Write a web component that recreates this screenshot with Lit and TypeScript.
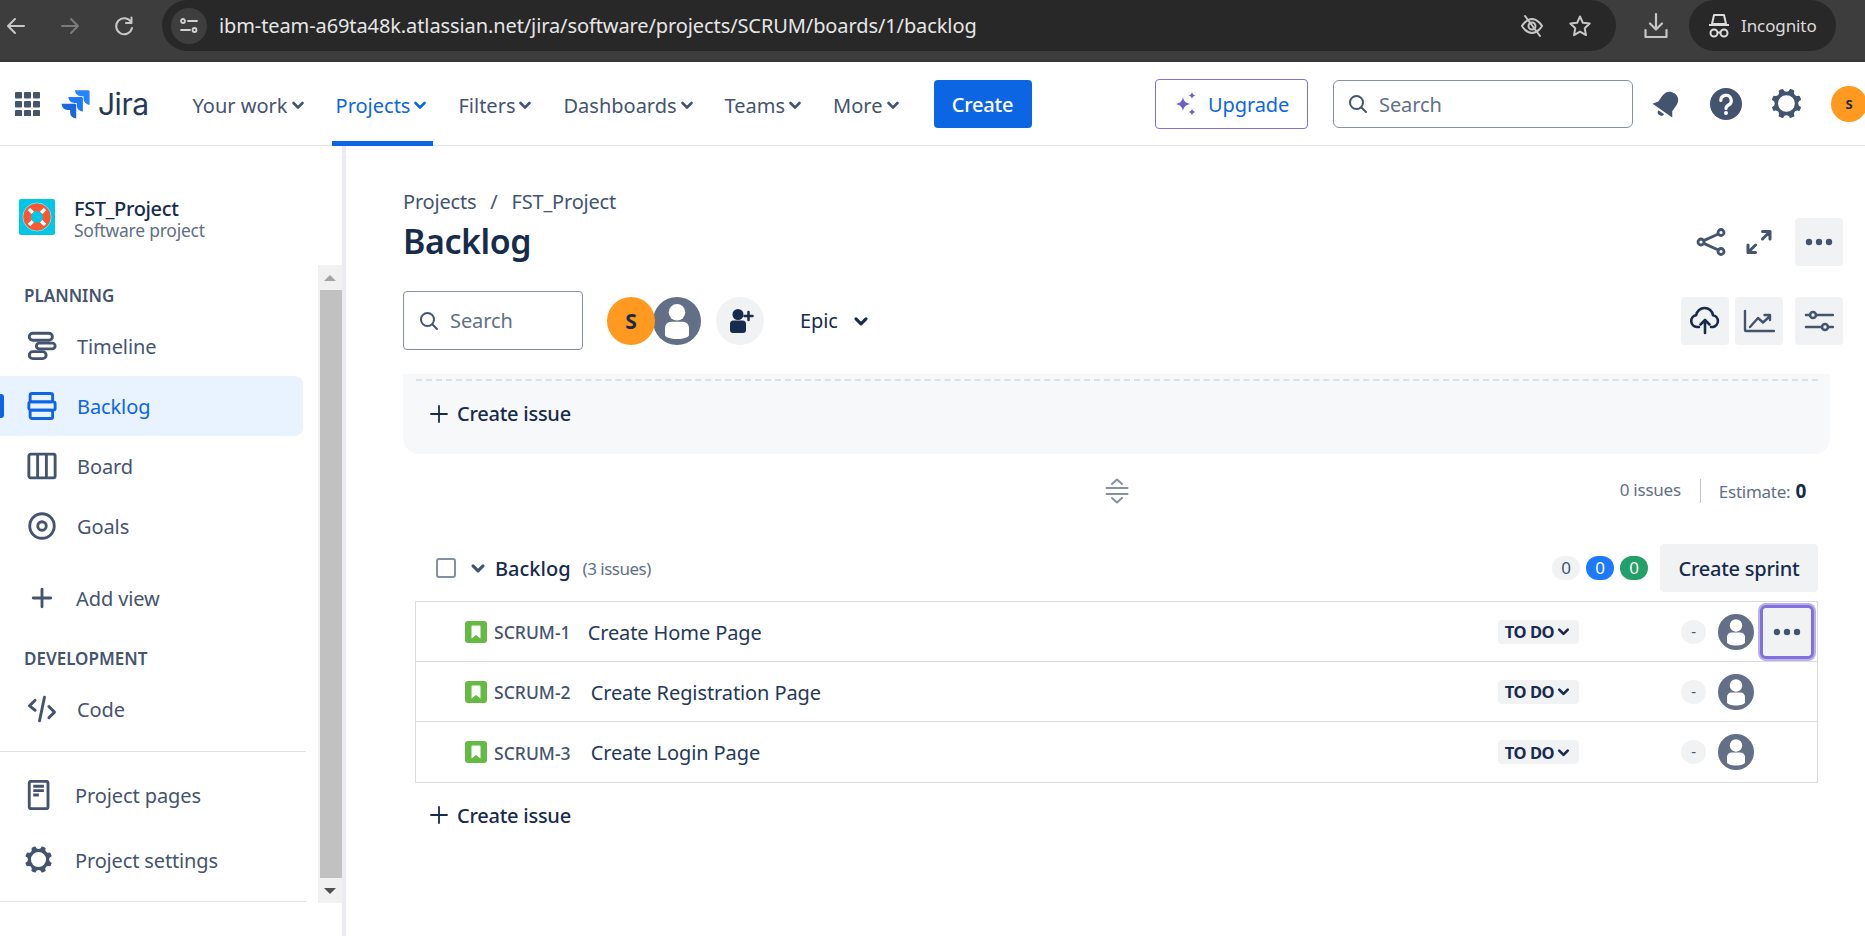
import { html, css, svg, LitElement } from 'lit';
import { customElement } from 'lit/decorators.js';

const chevron = (size = 18, w = 2.6) => html`<svg class="chev" width=${size} height=${size} viewBox="0 0 18 18" fill="none" stroke="currentColor" stroke-width=${w} stroke-linecap="round" stroke-linejoin="round"><path d="M4.5 7l4.5 4.5L13.500 7"/></svg>`;

const magnifier = html`<svg width="24" height="24" viewBox="0 0 24 24" fill="none" stroke="#44546f" stroke-width="2" stroke-linecap="round"><circle cx="10.500" cy="10.500" r="6.500"/><path d="M15.500 15.500L20 20"/></svg>`;

const avatar = (size: number) => html`<svg width=${size} height=${size} viewBox="0 0 36 36"><circle cx="18" cy="18" r="18" fill="#626f86"/><circle cx="18" cy="11.500" r="6.200" fill="#fff"/><path d="M9 23a4.500 4.500 0 0 1 4.500-4.500h9A4.500 4.500 0 0 1 27 23v5.500c0 1.500-4 3-9 3s-9-1.500-9-3z" fill="#fff"/></svg>`;

const dots = html`<svg width="30" height="10" viewBox="0 0 30 10" fill="#44546f"><circle cx="5" cy="5" r="3.200"/><circle cx="15" cy="5" r="3.200"/><circle cx="25" cy="5" r="3.200"/></svg>`;

const plus = html`<svg width="18" height="18" viewBox="0 0 18 18" stroke="#172b4d" stroke-width="1.800" stroke-linecap="round"><path d="M9 1v16M1 9h16"/></svg>`;

const gearPath = 'M11.701 16.7a5.002 5.002 0 110-10.003 5.002 5.002 0 010 10.004m8.368-3.117a1.995 1.995 0 01-1.346-1.885c0-.876.563-1.613 1.345-1.885a.48.48 0 00.315-.574 8.947 8.947 0 00-.836-1.993.477.477 0 00-.598-.195 2.04 2.04 0 01-1.29.08 1.988 1.988 0 01-1.404-1.395 2.04 2.04 0 01.076-1.297.478.478 0 00-.196-.597 8.98 8.98 0 00-1.975-.826.479.479 0 00-.574.314 1.995 1.995 0 01-1.885 1.346 1.994 1.994 0 01-1.884-1.345.482.482 0 00-.575-.315c-.708.2-1.379.485-2.004.842a.47.47 0 00-.198.582A2.002 2.002 0 014.445 7.06a.478.478 0 00-.595.196 8.946 8.946 0 00-.833 1.994.48.48 0 00.308.572 1.995 1.995 0 011.323 1.877c0 .867-.552 1.599-1.324 1.877a.479.479 0 00-.308.57 8.99 8.99 0 00.723 1.79.477.477 0 00.624.194c.595-.273 1.343-.264 2.104.238.117.077.225.185.302.3.527.8.512 1.58.198 2.188a.473.473 0 00.168.628 8.946 8.946 0 002.11.897.474.474 0 00.57-.313 1.995 1.995 0 011.886-1.353c.878 0 1.618.567 1.887 1.353a.475.475 0 00.57.313 8.964 8.964 0 002.084-.883.473.473 0 00.167-.631c-.318-.608-.337-1.393.191-2.195.077-.116.185-.225.302-.302.772-.511 1.527-.513 2.125-.23a.477.477 0 00.628-.19 8.925 8.925 0 00.728-1.793.478.478 0 00-.314-.573z';

const gear = (size: number) => html`<svg class="gear" width=${size} height=${size} viewBox="0 0 24 24" fill="#44546f"><path fill-rule="evenodd" d=${gearPath}/></svg>`;

const sideIcons: Record<string, unknown> = {
	timeline: svg`<rect x="1.800" y="1.800" width="18.500" height="5.600" rx="2.800"/><rect x="7.500" y="9.700" width="15" height="4.600" rx="2.300"/><rect x="1.800" y="16.500" width="13.500" height="5.600" rx="2.800"/>`,
	backlog: svg`<rect x="2.500" y="2" width="18" height="6.700" rx="1.500"/><rect x="1.500" y="8.700" width="21" height="6.600" rx="1.500"/><rect x="2.500" y="15.300" width="18" height="6.700" rx="1.500"/>`,
	board: svg`<rect x="1.500" y="2.500" width="21" height="19" rx="1.500"/><path d="M8.500 2.500v19M15.500 2.500v19"/>`,
	goals: svg`<circle cx="12" cy="12" r="9.800"/><circle cx="12" cy="12" r="3.400"/>`,
	add: svg`<path d="M12 5v14M5 12h14" stroke-linecap="round"/>`,
	code: svg`<path d="M6.500 5L2 9.500 6.500 13M17.500 10L22 14.500 17.500 19M14 2.500L10 21.500" stroke-linecap="round" stroke-linejoin="round"/>`,
	pages: svg`<rect x="1.800" y="1" width="15" height="22" rx="1.500"/><path d="M5 5h8.500M5 8.500h8.500M5 12h4.500"/>`,
};

const sideIcon = (name: string) => html`<svg width="30" height="30" viewBox="0 0 24 24" fill="none" stroke="currentColor" stroke-width="2.300">${sideIcons[name]}</svg>`;

const rows = [
	{ key: 'SCRUM-1', title: 'Create Home Page', gap: 17, focused: true },
	{ key: 'SCRUM-2', title: 'Create Registration Page', gap: 20, focused: false },
	{ key: 'SCRUM-3', title: 'Create Login Page', gap: 20, focused: false },
];

@customElement('app-root')
export class AppRoot extends LitElement {
	static styles = css`:host {
		display: flex;
		flex-direction: column;
		width: 1865px;
		height: 936px;
		overflow: hidden;
		background: #fff;
		color: #172b4d;
		font-family: "Noto Sans", "Open Sans", sans-serif;
		font-size: 20px;
		letter-spacing: -0.1px;
	}

	svg {
		display: block;
		flex: none;
	}

	/* browser chrome */
	.chrome {
		flex: none;
		display: flex;
		height: 62px;
		box-sizing: border-box;
		padding-left: 4px;
		background: #3d3d3d;
		border-bottom: 2px solid #383838;
		color: #c7c7c7;
	}

	.chrome-nav {
		display: flex;
		gap: 30px;
		height: 51px;
		align-items: center;
	}

	.url {
		display: flex;
		align-items: center;
		width: 1454px;
		height: 51px;
		margin-left: 26px;
		box-sizing: border-box;
		padding: 0 24px 0 9px;
		border-radius: 26px;
		background: #282828;
	}

	.tune {
		display: flex;
		align-items: center;
		justify-content: center;
		width: 36px;
		height: 36px;
		border-radius: 50%;
		background: #3e3e3e;
	}

	.url-text {
		margin-left: 12px;
		flex: 1;
		color: #e6e6e6;
		font-size: 20px;
		letter-spacing: -0.1px;
	}

	.url-icons {
		display: flex;
		gap: 24px;
	}

	.download {
		display: flex;
		align-items: center;
		height: 51px;
		margin-left: 28px;
	}

	.incognito {
		display: flex;
		align-items: center;
		gap: 10px;
		width: 147px;
		height: 51px;
		margin-left: 21px;
		box-sizing: border-box;
		padding-left: 18px;
		border-radius: 26px;
		background: #282828;
		color: #dcdcdc;
		font-size: 17px;
		letter-spacing: -0.1px;
	}

	/* jira top bar */
	.topbar {
		flex: none;
		display: flex;
		align-items: center;
		height: 82px;
		padding: 1px 0 0 15px;
		border-bottom: 1px solid #dfe1e6;
		color: #44546f;
	}

	.logo {
		display: flex;
		align-items: center;
		gap: 8px;
		margin-left: 19px;
		color: #253858;
		font-size: 30px;
		font-weight: 400;
		letter-spacing: -0.5px;
		font-family: "Inter", sans-serif;
	}

	.menu {
		display: flex;
		align-self: stretch;
		gap: 21px;
		margin: 0 0 -1px 40px;
	}

	.menu-item {
		display: flex;
		align-items: center;
		gap: 1px;
		padding: 6px 4px 0;
		border-bottom: 5px solid transparent;
		letter-spacing: 0;
	}

	.menu-item.active {
		color: #0c66e4;
		border-bottom-color: #0c66e4;
	}

	.create-btn {
		display: flex;
		align-items: center;
		justify-content: center;
		width: 98px;
		height: 48px;
		margin-left: 28px;
		border-radius: 4px;
		background: #0c66e4;
		color: #fff;
		font-weight: 500;
		letter-spacing: -0.2px;
	}

	.upgrade {
		display: flex;
		align-items: center;
		gap: 11px;
		margin-left: auto;
		width: 153px;
		height: 50px;
		box-sizing: border-box;
		padding-left: 19px;
		border: 1px solid #8270db;
		border-radius: 4px;
		color: #0c66e4;
	}

	.top-search {
		display: flex;
		align-items: center;
		gap: 9px;
		width: 300px;
		height: 48px;
		margin-left: 25px;
		box-sizing: border-box;
		padding-left: 12px;
		border: 1px solid #8590a2;
		border-radius: 6px;
		color: #626f86;
	}

	.top-icons {
		display: flex;
		align-items: center;
		gap: 23px;
		margin: 0 -2px 0 16px;
	}

	.me {
		display: flex;
		align-items: center;
		justify-content: center;
		border-radius: 50%;
		background: #ff991f;
		color: #172b4d;
		font-weight: 700;
		letter-spacing: 0;
	}

	.me.small {
		width: 36px;
		height: 36px;
		margin-left: 1px;
		font-size: 13px;
	}

	/* page */
	.body {
		flex: 1;
		display: flex;
		min-height: 0;
	}

	.sidebar {
		flex: none;
		width: 346px;
		box-sizing: border-box;
		border-right: 4px solid #ebecf0;
		color: #44546f;
	}

	.project {
		display: flex;
		gap: 19px;
		height: 119px;
		box-sizing: border-box;
		padding: 53px 0 0 19px;
	}

	.project-name {
		color: #172b4d;
		font-size: 20px;
		font-weight: 500;
		line-height: 24px;
		margin-top: -2px;
		letter-spacing: -0.35px;
	}

	.project-type {
		color: #626f86;
		font-size: 17.500px;
		line-height: 18px;
		letter-spacing: -0.25px;
	}

	.side-scroll {
		display: flex;
		height: 638px;
	}

	.side-list {
		width: 318px;
		flex: none;
	}

	.side-label {
		height: 22px;
		line-height: 22px;
		padding-left: 24px;
		font-size: 17px;
		font-weight: 600;
		letter-spacing: 0;
		color: #44546f;
	}

	.side-label.planning {
		margin: 20px 0 9px;
	}

	.side-label.development {
		margin: 20px 0 9px;
	}

	.side-row {
		display: flex;
		align-items: center;
		gap: 20px;
		width: 303px;
		height: 60px;
		box-sizing: border-box;
		padding-left: 27px;
	}

	.side-row.active {
		position: relative;
		background: #e9f2ff;
		color: #0c66e4;
		border-radius: 0 8px 8px 0;
	}

	.side-row.active::before {
		content: "";
		position: absolute;
		left: 0;
		top: 18px;
		width: 4px;
		height: 24px;
		border-radius: 0 3px 3px 0;
		background: #0c66e4;
	}

	.side-row.add {
		gap: 19px;
		margin-top: 12px;
	}

	.side-row.pages {
		gap: 18px;
		margin-top: 13px;
	}

	.side-row.settings {
		gap: 18px;
		margin-top: 5px;
		letter-spacing: -0.15px;
	}

	.side-row .gear {
		margin-left: -6px;
	}

	.side-divider {
		width: 306px;
		height: 1px;
		margin-top: 12px;
		background: #dfe1e6;
	}

	.side-divider.last {
		margin-top: 11px;
	}

	.scrollbar {
		flex: none;
		display: flex;
		flex-direction: column;
		justify-content: space-between;
		width: 24px;
		background: #f1f1f1;
	}

	.scroll-end {
		display: flex;
		align-items: center;
		justify-content: center;
		height: 25px;
	}

	.scroll-thumb {
		flex: 1;
		margin-left: 2px;
		background: #c1c1c1;
	}

	.arrow {
		width: 0;
		height: 0;
		border-left: 6px solid transparent;
		border-right: 6px solid transparent;
	}

	.arrow.up {
		border-bottom: 6px solid #a3a3a3;
	}

	.arrow.down {
		border-top: 6px solid #505050;
	}

	.main {
		flex: 1;
		min-width: 0;
		box-sizing: border-box;
		padding: 44px 22px 0 57px;
	}

	.crumbs {
		display: flex;
		gap: 14px;
		height: 24px;
		line-height: 24px;
		color: #44546f;
		letter-spacing: -0.2px;
	}

	.title-row {
		display: flex;
		align-items: center;
		justify-content: space-between;
		height: 56px;
	}

	h1 {
		margin: -2px 0 0;
		font-size: 34px;
		font-weight: 600;
		letter-spacing: -0.45px;
		color: #172b4d;
	}

	.actions {
		display: flex;
		align-items: center;
	}

	.icon-btn {
		display: flex;
		align-items: center;
		justify-content: center;
		width: 48px;
		height: 48px;
		border-radius: 4px;
	}

	.icon-btn.filled {
		background: #f1f2f4;
	}

	.icon-btn.dots-btn {
		margin-left: 12px;
	}

	.toolbar {
		display: flex;
		align-items: center;
		height: 59px;
		margin-top: 21px;
	}

	.board-search {
		display: flex;
		align-items: center;
		gap: 9px;
		width: 180px;
		height: 59px;
		box-sizing: border-box;
		padding-left: 13px;
		border: 1px solid #8590a2;
		border-radius: 4px;
		color: #626f86;
	}

	.me.big {
		position: relative;
		z-index: 1;
		width: 48px;
		height: 48px;
		margin-left: 24px;
		font-size: 21px;
	}

	.me.big + svg {
		margin-left: -2px;
	}

	.add-person {
		display: flex;
		align-items: center;
		justify-content: center;
		width: 48px;
		height: 48px;
		margin-left: 15px;
		border-radius: 50%;
		background: #f1f2f4;
	}

	.epic {
		display: flex;
		align-items: center;
		gap: 13px;
		margin-left: 36px;
	}

	.toolbar-right {
		display: flex;
		gap: 6px;
		margin-left: auto;
	}

	.toolbar-right .icon-btn:last-child {
		margin-left: 6px;
	}

	.sprint {
		height: 80px;
		margin: 24px 13px 0 0;
		box-sizing: border-box;
		padding: 5px 12px 0 13px;
		border-radius: 0 0 16px 16px;
		background: #f7f8f9;
	}

	.drop {
		display: flex;
		align-items: center;
		height: 67px;
		box-sizing: border-box;
		padding-left: 14px;
		border-top: 2px dashed #dcdfe4;
	}

	.add-issue {
		display: flex;
		align-items: center;
		gap: 9px;
		font-weight: 500;
		color: #172b4d;
		letter-spacing: -0.25px;
	}

	.stats {
		display: grid;
		grid-template-columns: 1fr auto 1fr;
		align-items: center;
		height: 24px;
		margin: 24px 13px 0 0;
	}

	.totals {
		display: flex;
		align-items: center;
		justify-content: flex-end;
		padding-right: 24px;
		color: #626f86;
		font-size: 17px;
		letter-spacing: -0.25px;
	}

	.totals .issue-total {
		margin-top: -3px;
	}

	.totals .rule {
		width: 1px;
		height: 24px;
		margin: 0 18px 0 19px;
		background: #c1c7d0;
	}

	.totals .estimate {
		margin-top: 1px;
	}

	.totals b {
		margin-left: 5px;
		color: #172b4d;
		font-size: 19px;
		font-weight: 700;
	}

	.backlog {
		margin: 42px 25px 0 12px;
	}

	.backlog-head {
		display: flex;
		align-items: center;
		height: 48px;
		margin-bottom: 9px;
		padding-left: 21px;
	}

	.check {
		width: 20px;
		height: 20px;
		box-sizing: border-box;
		border: 2px solid #8590a2;
		border-radius: 3px;
	}

	.backlog-chev {
		margin: 0 7px 0 12px;
		color: #44546f;
	}

	.backlog-name {
		font-weight: 500;
		color: #172b4d;
		letter-spacing: 0;
	}

	.backlog-count {
		margin-left: 12px;
		color: #626f86;
		font-size: 17px;
		letter-spacing: -0.5px;
	}

	.counts {
		display: flex;
		gap: 6px;
		margin-left: auto;
	}

	.count {
		width: 28px;
		height: 24px;
		border-radius: 12px;
		background: #f1f2f4;
		color: #44546f;
		font-size: 17px;
		line-height: 24px;
		text-align: center;
	}

	.count.blue {
		background: #1d7afc;
		color: #fff;
	}

	.count.green {
		background: #22a06b;
		color: #fff;
	}

	.sprint-btn {
		display: flex;
		align-items: center;
		justify-content: center;
		width: 158px;
		height: 48px;
		margin-left: 12px;
		padding-top: 1px;
		box-sizing: border-box;
		border-radius: 4px;
		background: #f1f2f4;
		font-weight: 500;
		letter-spacing: -0.25px;
	}

	.issues {
		border: 1px solid #d9dce1;
	}

	.issue {
		display: flex;
		align-items: center;
		height: 60px;
		box-sizing: border-box;
		padding: 0 3px 0 49px;
		border-bottom: 1px solid #d9dce1;
		color: #44546f;
	}

	.issue:last-child {
		border-bottom: none;
	}

	.key {
		margin-left: 7px;
		padding-top: 1px;
		font-size: 17.500px;
		letter-spacing: 0.03px;
		font-weight: 500;
	}

	.issue-title {
		flex: 1;
		padding-top: 1px;
		color: #253858;
	}

	.status {
		display: flex;
		align-items: center;
		justify-content: center;
		gap: 1px;
		width: 81px;
		height: 24px;
		border-radius: 4px;
		background: #f1f2f4;
		color: #172b4d;
		font-size: 16.500px;
		font-weight: 700;
		letter-spacing: -0.45px;
	}

	.dash {
		width: 25px;
		height: 24px;
		margin-left: 102px;
		border-radius: 12px;
		background: #f1f2f4;
		font-size: 15px;
		line-height: 22px;
		text-align: center;
		color: #44546f;
	}

	.issue-avatar {
		margin-left: 12px;
	}

	.more-slot {
		display: flex;
		align-items: center;
		justify-content: center;
		width: 54px;
		height: 54px;
		margin-left: 6px;
		box-sizing: border-box;
	}

	.more-slot.focused {
		border: 3px solid #8270db;
		border-radius: 6px;
		background: #f1f2f4;
		box-shadow: 0 0 0 2px rgba(130, 112, 219, 0.55);
	}

	.after-list {
		display: flex;
		align-items: center;
		height: 24px;
		margin: 20px 0 0 27px;
	}
	`;

	renderChrome() {
		return html`<div class="chrome">
			<div class="chrome-nav">
				<svg width="24" height="24" viewBox="0 0 24 24" fill="none" stroke="#c7c7c7" stroke-width="2" stroke-linecap="round" stroke-linejoin="round"><path d="M20 12H5M11 5l-7 7 7 7"/></svg>
				<svg width="24" height="24" viewBox="0 0 24 24" fill="none" stroke="#7b7b7b" stroke-width="2" stroke-linecap="round" stroke-linejoin="round"><path d="M4 12h15M13 5l7 7-7 7"/></svg>
				<svg width="24" height="24" viewBox="0 0 24 24" fill="none" stroke="#c7c7c7" stroke-width="2" stroke-linecap="round" stroke-linejoin="round"><path d="M19 8a8 8 0 1 0 1 6M19.500 3.500V9H14"/></svg>
			</div>
			<div class="url">
				<span class="tune"><svg width="22" height="22" viewBox="0 0 22 22" fill="none" stroke="#d2d2d2" stroke-width="1.800" stroke-linecap="round"><circle cx="5" cy="6" r="2"/><path d="M10 6h9M3 15h9"/><circle cx="16.500" cy="15" r="2"/></svg></span>
				<span class="url-text">ibm-team-a69ta48k.atlassian.net/jira/software/projects/SCRUM/boards/1/backlog</span>
				<div class="url-icons">
					<svg width="24" height="24" viewBox="0 0 24 24" fill="none" stroke="#c7c7c7" stroke-width="2" stroke-linecap="round"><path d="M2 12s4-7 10-7 10 7 10 7-4 7-10 7-10-7-10-7z"/><circle cx="12" cy="12" r="3.500"/><path d="M5 2l15 20"/></svg>
					<svg width="24" height="24" viewBox="0 0 24 24" fill="none" stroke="#c7c7c7" stroke-width="2" stroke-linejoin="round"><path d="M12 2.500l2.900 6.300 6.800.8-5 4.700 1.300 6.800-6-3.400-6 3.400 1.300-6.800-5-4.700 6.800-.8z"/></svg>
				</div>
			</div>
			<div class="download"><svg width="24" height="28" viewBox="0 0 24 28" fill="none" stroke="#c7c7c7" stroke-width="2.200" stroke-linecap="round" stroke-linejoin="round"><path d="M12 2v15M6 11.500l6 6 6-6M1.500 18v7h21v-7"/></svg></div>
			<div class="incognito">
				<svg width="24" height="26" viewBox="0 0 24 26" fill="none" stroke="#dcdcdc" stroke-width="2"><path d="M7 2h10l2 9H5zM2 12h20" stroke-linejoin="round"/><circle cx="7" cy="20" r="3.500"/><circle cx="17" cy="20" r="3.500"/><path d="M10.500 19.500h3"/></svg>
				<span>Incognito</span>
			</div>
		</div>`;
	}

	renderTopbar() {
		const items = ['Your work', 'Projects', 'Filters', 'Dashboards', 'Teams', 'More'];
		return html`<div class="topbar">
			<svg width="25" height="24" viewBox="0 0 25 24" fill="#44546f">
				${[0, 9, 18].map((y) => [0, 9, 18].map((x) => svg`<rect x=${x} y=${y} width="7" height="6.500" rx="1"/>`))}
			</svg>
			<div class="logo">
				<svg width="31" height="31" viewBox="0 0 24 24">
					<path fill="#2684ff" d="M22.800 1H12.400a4.700 4.700 0 0 0 4.700 4.700h1.900v1.900a4.700 4.700 0 0 0 4.700 4.700V2a1 1 0 0 0-.9-1z"/>
					<path fill="#1d7afc" d="M17.600 6.200H7.200a4.700 4.700 0 0 0 4.700 4.700h1.900v1.900a4.700 4.700 0 0 0 4.700 4.700V7.200a1 1 0 0 0-.9-1z"/>
					<path fill="#1868db" d="M12.400 11.500H2a4.700 4.700 0 0 0 4.700 4.700h1.900v1.900a4.700 4.700 0 0 0 4.700 4.700V12.500a1 1 0 0 0-.9-1z"/>
				</svg>
				<span>Jira</span>
			</div>
			<div class="menu">
				${items.map((item) => html`<div class="menu-item ${item === 'Projects' ? 'active' : ''}"><span>${item}</span>${chevron()}</div>`)}
			</div>
			<div class="create-btn">Create</div>
			<div class="upgrade">
				<svg width="22" height="26" viewBox="0 0 22 26" fill="#6e5dc6"><path d="M8 6c.8 4 2.500 6 7 7-4.500 1-6.200 3-7 7-.8-4-2.500-6-7-7 4.500-1 6.200-3 7-7zM17 1c.4 2 1.200 3 3.500 3.500C18.200 5 17.400 6 17 8c-.4-2-1.200-3-3.500-3.500C15.800 4 16.600 3 17 1zM17 17.500c.4 2 1.200 3 3.500 3.500-2.300.5-3.100 1.500-3.500 3.500-.4-2-1.200-3-3.500-3.500 2.300-.5 3.100-1.500 3.500-3.500z"/></svg>
				<span>Upgrade</span>
			</div>
			<div class="top-search">${magnifier}<span>Search</span></div>
			<div class="top-icons">
				<svg width="36" height="36" viewBox="0 0 36 36" fill="#44546f"><g transform="rotate(35 18 18)"><path d="M18 5c-5.500 0-8.500 4-8.500 9v7L6 26h24l-3.500-5v-7c0-5-3-9-8.500-9z"/><path d="M14.500 28a3.500 3.500 0 0 0 7 0z"/></g></svg>
				<svg width="36" height="36" viewBox="0 0 36 36"><circle cx="18" cy="18" r="16" fill="#44546f"/><path d="M12.800 14.500a5.200 5.200 0 1 1 7.800 4.500c-1.700 1-2.600 1.800-2.600 3.500" fill="none" stroke="#fff" stroke-width="3.200" stroke-linecap="round"/><circle cx="18" cy="27" r="2" fill="#fff"/></svg>
				${gear(40)}
				<div class="me small">S</div>
			</div>
		</div>`;
	}

	sideRow(icon: unknown, label: string, cls = '') {
		return html`<div class="side-row ${cls}">${icon}<span>${label}</span></div>`;
	}

	renderSidebar() {
		return html`<aside class="sidebar">
			<div class="project">
				<svg width="36" height="36" viewBox="0 0 36 36">
					<rect width="36" height="36" rx="2" fill="#00c7e6"/>
					<circle cx="18" cy="18" r="14" fill="none" stroke="#b3eef7" stroke-width="0.800"/>
					<circle cx="18" cy="18" r="9.800" fill="none" stroke="#ff5630" stroke-width="7.500"/>
					<g stroke="#fff" stroke-width="3.400"><path d="M10 10l3.800 3.800M26 10l-3.800 3.800M10 26l3.800-3.800M26 26l-3.800-3.800"/></g>
				</svg>
				<div>
					<div class="project-name">FST_Project</div>
					<div class="project-type">Software project</div>
				</div>
			</div>
			<div class="side-scroll">
				<div class="side-list">
					<div class="side-label planning">PLANNING</div>
					${this.sideRow(sideIcon('timeline'), 'Timeline')}
					${this.sideRow(sideIcon('backlog'), 'Backlog', 'active')}
					${this.sideRow(sideIcon('board'), 'Board')}
					${this.sideRow(sideIcon('goals'), 'Goals')}
					${this.sideRow(sideIcon('add'), 'Add view', 'add')}
					<div class="side-label development">DEVELOPMENT</div>
					${this.sideRow(sideIcon('code'), 'Code')}
					<div class="side-divider"></div>
					${this.sideRow(sideIcon('pages'), 'Project pages', 'pages')}
					${this.sideRow(gear(36), 'Project settings', 'settings')}
					<div class="side-divider last"></div>
				</div>
				<div class="scrollbar">
					<div class="scroll-end"><div class="arrow up"></div></div>
					<div class="scroll-thumb"></div>
					<div class="scroll-end"><div class="arrow down"></div></div>
				</div>
			</div>
		</aside>`;
	}

	renderHeader() {
		return html`<div class="crumbs"><span>Projects</span><span>/</span><span>FST_Project</span></div>
		<div class="title-row">
			<h1>Backlog</h1>
			<div class="actions">
				<div class="icon-btn"><svg width="30" height="30" viewBox="0 0 30 30" fill="none" stroke="#44546f" stroke-width="2.800"><circle cx="5" cy="15" r="3"/><circle cx="25" cy="5.500" r="3"/><circle cx="25" cy="24.500" r="3"/><path d="M7.700 13.600L22.300 7M7.700 16.400L22.300 23"/></svg></div>
				<div class="icon-btn"><svg width="26" height="26" viewBox="0 0 26 26" fill="none" stroke="#44546f" stroke-width="3" stroke-linecap="round" stroke-linejoin="round"><path d="M16.500 2.500H24v7.500M24 2.500l-7.500 7.500M9.500 23.500H2V16M2 23.500L9.500 16"/></svg></div>
				<div class="icon-btn filled dots-btn">${dots}</div>
			</div>
		</div>
		<div class="toolbar">
			<div class="board-search">${magnifier}<span>Search</span></div>
			<div class="me big">S</div>
			${avatar(48)}
			<div class="add-person">
				<svg width="28" height="28" viewBox="0 0 28 28" fill="#172b4d"><circle cx="12" cy="7.500" r="5.500"/><path d="M4 17a3.500 3.500 0 0 1 3.500-3.500h9A3.500 3.500 0 0 1 20 17v6a3 3 0 0 1-3 3H7a3 3 0 0 1-3-3z"/><path d="M22.500 5v8M18.500 9h8" stroke="#172b4d" stroke-width="2.500" stroke-linecap="round"/></svg>
			</div>
			<div class="epic"><span>Epic</span>${chevron(20, 2.8)}</div>
			<div class="toolbar-right">
				<div class="icon-btn filled"><svg width="32" height="32" viewBox="0 0 32 32" fill="none" stroke="#172b4d" stroke-width="2.600" stroke-linecap="round" stroke-linejoin="round"><path d="M10 22H8a6 6 0 0 1-.8-11.900A8.500 8.500 0 0 1 24 10.200 6 6 0 0 1 24 22h-2"/><path d="M16 28V15M11.500 19.500L16 15l4.500 4.500"/></svg></div>
				<div class="icon-btn filled"><svg width="32" height="24" viewBox="0 0 32 24" fill="none" stroke="#44546f" stroke-width="2.400" stroke-linecap="round" stroke-linejoin="round"><path d="M2 2v19a1 1 0 0 0 1 1h28"/><path d="M7 18l8-9 5 4.500 7-6.500M21.500 6H27v5"/></svg></div>
				<div class="icon-btn filled"><svg width="30" height="30" viewBox="0 0 30 30" fill="none" stroke="#44546f" stroke-width="2.500" stroke-linecap="round"><path d="M2 9h4M12 9h17M2 21h16M24 21h5"/><circle cx="9" cy="9" r="3"/><circle cx="21" cy="21" r="3"/></svg></div>
			</div>
		</div>`;
	}

	renderIssue(row: (typeof rows)[number]) {
		return html`<div class="issue">
			<svg width="22" height="22" viewBox="0 0 22 22"><rect width="22" height="22" rx="3" fill="#65ba43"/><path d="M6.500 5.500a1 1 0 0 1 1-1h7a1 1 0 0 1 1 1v12L11 14l-4.500 3.500z" fill="#fff"/></svg>
			<span class="key">${row.key}</span>
			<span class="issue-title" style="margin-left:${row.gap}px">${row.title}</span>
			<span class="status">TO DO${chevron(17, 2.8)}</span>
			<span class="dash">-</span>
			<span class="issue-avatar">${avatar(36)}</span>
			<span class="more-slot ${row.focused ? 'focused' : ''}">${row.focused ? dots : ''}</span>
		</div>`;
	}

	render() {
		return html`${this.renderChrome()}
		${this.renderTopbar()}
		<div class="body">
			${this.renderSidebar()}
			<main class="main">
				${this.renderHeader()}
				<div class="sprint">
					<div class="drop"><div class="add-issue">${plus}<span>Create issue</span></div></div>
				</div>
				<div class="stats">
					<span></span>
					<svg width="24" height="26" viewBox="0 0 24 26" fill="none" stroke="#8590a2" stroke-width="2" stroke-linecap="round" stroke-linejoin="round"><path d="M7 6l5-4.500L17 6M1.500 10h21M1.500 16h21M7 20l5 4.500L17 20"/></svg>
					<div class="totals"><span class="issue-total">0 issues</span><span class="rule"></span><span class="estimate">Estimate:</span><b>0</b></div>
				</div>
				<div class="backlog">
					<div class="backlog-head">
						<span class="check"></span>
						<span class="backlog-chev">${chevron(20, 2.8)}</span>
						<span class="backlog-name">Backlog</span>
						<span class="backlog-count">(3 issues)</span>
						<div class="counts">
							<span class="count">0</span>
							<span class="count blue">0</span>
							<span class="count green">0</span>
						</div>
						<div class="sprint-btn">Create sprint</div>
					</div>
					<div class="issues">${rows.map((row) => this.renderIssue(row))}</div>
				</div>
				<div class="after-list"><div class="add-issue">${plus}<span>Create issue</span></div></div>
			</main>
		</div>`;
	}
}

declare global {
	interface HTMLElementTagNameMap {
		"app-root": AppRoot,
	}
}
